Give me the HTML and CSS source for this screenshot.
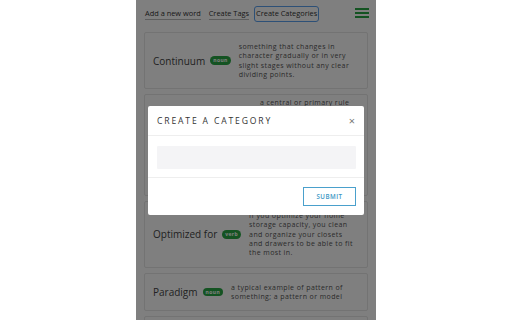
FILE: index.html
```html
<!DOCTYPE html>
<html>
<head>
<meta charset="utf-8">
<link rel="stylesheet" href="styles.css">
</head>
<body>
<div class="app">
  <nav class="nav">
    <a class="nav-link">Add a new word</a>
    <a class="nav-link">Create Tags</a>
    <a class="nav-link active">Create Categories</a>
    <span class="burger"><i></i><i></i><i></i></span>
  </nav>
  <div class="cards">
    <div class="card">
      <div class="term"><span class="word">Continuum</span><span class="badge">noun</span></div>
      <p class="def">something that changes in character gradually or in very slight stages without any clear dividing points.</p>
    </div>
    <div class="card tall">
      <div class="term wide"><span class="word">Principle</span><span class="badge">noun</span></div>
      <p class="def">a central or primary rule or law; a fundamental truth or proposition that serves as the foundation for a system of belief or behaviour or for a chain of reasoning.</p>
    </div>
    <div class="card">
      <div class="term"><span class="word">Optimized for</span><span class="badge">verb</span></div>
      <p class="def">If you optimize your home storage capacity, you clean and organize your closets and drawers to be able to fit the most in.</p>
    </div>
    <div class="card">
      <div class="term"><span class="word">Paradigm</span><span class="badge">noun</span></div>
      <p class="def">a typical example of pattern of something; a pattern or model</p>
    </div>
    <div class="card">
      <div class="term"><span class="word">Ubiquitous</span><span class="badge">adj</span></div>
      <p class="def">present, appearing, or found everywhere.</p>
    </div>
  </div>
  <div class="overlay">
    <div class="modal">
      <div class="modal-head">
        <h2 class="modal-title">CREATE A CATEGORY</h2>
        <span class="close">&times;</span>
      </div>
      <div class="modal-body">
        <div class="input"></div>
      </div>
      <div class="modal-foot">
        <button class="submit">SUBMIT</button>
      </div>
    </div>
  </div>
</div>
</body>
</html>
```
FILE: styles.css
```css
* { box-sizing: border-box; }
html, body { margin: 0; padding: 0; background: #fff; }
body { font-family: "Open Sans", "DejaVu Sans", sans-serif; color: #333; overflow: hidden; height: 320px; }
.app { position: relative; width: 240px; height: 320px; margin: 0 auto; background: #fff; overflow: hidden; }
.nav { display: flex; align-items: center; height: 28px; padding: 0 7px 0 9px; }
.nav-link { font-size: 7.4px; color: #333; border-bottom: 1px solid #bbb; line-height: 9px; padding: 1px 0; margin-right: 8px; }
.nav-link.active { outline: 1.5px solid #5aa0ee; outline-offset: 1px; border-radius: 1px; border-bottom-color: transparent; margin-left: -1px; }
.burger { margin-left: auto; display: flex; flex-direction: column; gap: 2.6px; width: 14px; margin-top: -2px; }
.burger i { display: block; height: 1.7px; background: #28a745; }
.cards { padding: 4px 8px 0; display: flex; flex-direction: column; gap: 5px; }
.card { display: flex; align-items: center; border: 1px solid #e6e6e6; border-radius: 2px; padding: 9px 11px 9px 8px; }
.card.tall { min-height: 102px; align-items: flex-start; padding-top: 3px; }
.term { display: flex; align-items: center; flex: none; margin-right: 8px; }
.term.wide { width: 99px; align-self: center; }
.word { font-size: 10px; color: #444; }
.badge { margin-left: 5px; background: #28a745; color: #fff; font-size: 5px; font-weight: 700; letter-spacing: 0.4px; border-radius: 5px; padding: 1px 3px; line-height: 6.5px; }
.def { margin: 0; font-size: 7px; line-height: 9.3px; color: #555; letter-spacing: 0.4px; flex: 1; }
.overlay { position: absolute; inset: 0; background: rgba(0,0,0,0.5); padding: 106px 12px 0; }
.modal { background: #fff; border-radius: 2px; height: 109px; display: flex; flex-direction: column; }
.modal-head { display: flex; align-items: center; justify-content: space-between; height: 30px; padding: 0 9px; border-bottom: 1px solid #eee; }
.modal-title { margin: 0; font-size: 8.6px; font-weight: 400; letter-spacing: 1.85px; color: #333; }
.close { font-size: 11px; color: #777; line-height: 1; }
.modal-body { height: 42px; padding: 10px 8px 0 9px; border-bottom: 1px solid #eee; }
.input { height: 23px; background: #f4f4f6; border-radius: 1px; }
.modal-foot { flex: 1; display: flex; justify-content: flex-end; align-items: center; padding: 0 8px; }
.submit { width: 53px; height: 19px; background: #fff; border: 1.2px solid #4aa0cc; color: #3a96c4; font-family: inherit; font-size: 6.2px; font-weight: 600; letter-spacing: 0.5px; padding: 0; }
```
